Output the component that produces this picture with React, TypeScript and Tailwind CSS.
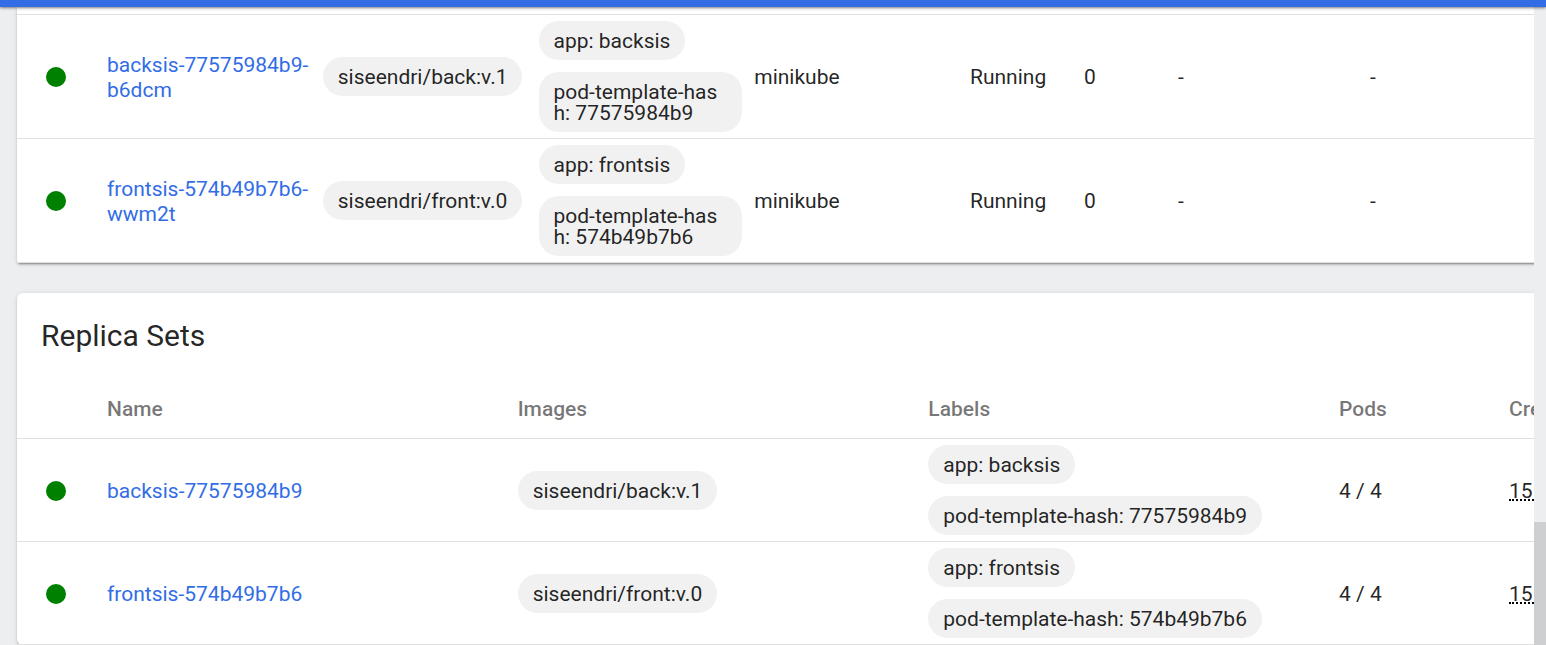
import React from "react";

type Pod = {
  name: string;
  image: string;
  labels: string[];
  node: string;
  status: string;
  restarts: number;
  cpu: string;
  memory: string;
};

type ReplicaSet = {
  name: string;
  image: string;
  labels: string[];
  pods: string;
  created: string;
};

const pods: Pod[] = [
  {
    name: "backsis-77575984b9-b6dcm",
    image: "siseendri/back:v.1",
    labels: ["app: backsis", "pod-template-hash: 77575984b9"],
    node: "minikube",
    status: "Running",
    restarts: 0,
    cpu: "-",
    memory: "-",
  },
  {
    name: "frontsis-574b49b7b6-wwm2t",
    image: "siseendri/front:v.0",
    labels: ["app: frontsis", "pod-template-hash: 574b49b7b6"],
    node: "minikube",
    status: "Running",
    restarts: 0,
    cpu: "-",
    memory: "-",
  },
];

const replicaSets: ReplicaSet[] = [
  {
    name: "backsis-77575984b9",
    image: "siseendri/back:v.1",
    labels: ["app: backsis", "pod-template-hash: 77575984b9"],
    pods: "4 / 4",
    created: "15 minutes ago",
  },
  {
    name: "frontsis-574b49b7b6",
    image: "siseendri/front:v.0",
    labels: ["app: frontsis", "pod-template-hash: 574b49b7b6"],
    pods: "4 / 4",
    created: "15 minutes ago",
  },
];

function ChipsCell({ items }: { items: string[] }) {
  return (
    <td>
      <div className="flex flex-wrap gap-3 py-1.5 pr-3">
        {items.map((item) => (
          <span
            key={item}
            className="rounded-[20px] bg-[#f1f1f1] px-[15px] pt-[10px] pb-2 leading-[21px] break-all"
          >
            {item}
          </span>
        ))}
      </div>
    </td>
  );
}

function TextCell({ children }: { children: React.ReactNode }) {
  return <td className="pt-0.5">{children}</td>;
}

function StatusCell() {
  return (
    <td className="pt-px pl-[29px]">
      <div className="size-5 rounded-full bg-[#008000]" />
    </td>
  );
}

function NameCell({ name }: { name: string }) {
  return (
    <td className="pt-0.5 pr-3">
      <a href="#" className="text-[#326de6]">
        {name}
      </a>
    </td>
  );
}

const cardShadow =
  "bg-white shadow-[0_3px_1px_-2px_rgba(0,0,0,0.2),0_2px_2px_0_rgba(0,0,0,0.14),0_1px_5px_0_rgba(0,0,0,0.12)]";
const tableStyle = "w-full table-fixed border-separate border-spacing-0 text-left [&_td]:border-b [&_td]:border-[#e0e0e0]";

function PodsCard() {
  return (
    <section className={`rounded-b-[3px] pt-[7px] ${cardShadow}`}>
      <table className={`${tableStyle} border-t border-[#e0e0e0]`}>
        <colgroup>
          <col className="w-[90px]" />
          <col />
          <col />
          <col />
          <col />
          <col className="w-[114px]" />
          <col className="w-[94px]" />
          <col className="w-[192px]" />
          <col className="w-[192px]" />
          <col className="w-[119px]" />
        </colgroup>
        <tbody>
          {pods.map((pod) => (
            <tr key={pod.name}>
              <StatusCell />
              <NameCell name={pod.name} />
              <ChipsCell items={[pod.image]} />
              <ChipsCell items={pod.labels} />
              <TextCell>{pod.node}</TextCell>
              <TextCell>{pod.status}</TextCell>
              <TextCell>{pod.restarts}</TextCell>
              <TextCell>{pod.cpu}</TextCell>
              <TextCell>{pod.memory}</TextCell>
              <td />
            </tr>
          ))}
        </tbody>
      </table>
    </section>
  );
}

function ReplicaSetsCard() {
  return (
    <section className={`rounded-[6px] ${cardShadow}`}>
      <h2 className="px-6 pt-[25px] pb-6 text-[30px] leading-9">Replica Sets</h2>
      <table className={tableStyle}>
        <colgroup>
          <col className="w-[90px]" />
          <col />
          <col />
          <col />
          <col className="w-[170px]" />
          <col className="w-[172px]" />
        </colgroup>
        <thead>
          <tr className="h-[61px] text-black/54 [&>*]:border-b [&>*]:border-[#e0e0e0] [&>*]:pt-0.5 [&>*]:font-medium">
            <td />
            <th scope="col">Name</th>
            <th scope="col">Images</th>
            <th scope="col">Labels</th>
            <th scope="col">Pods</th>
            <th scope="col">Created</th>
          </tr>
        </thead>
        <tbody>
          {replicaSets.map((set) => (
            <tr key={set.name}>
              <StatusCell />
              <NameCell name={set.name} />
              <ChipsCell items={[set.image]} />
              <ChipsCell items={set.labels} />
              <TextCell>{set.pods}</TextCell>
              <TextCell>
                <span className="inline-block border-b-2 border-dotted border-black leading-4 whitespace-nowrap">
                  {set.created}
                </span>
              </TextCell>
            </tr>
          ))}
        </tbody>
      </table>
    </section>
  );
}

export default function App() {
  return (
    <div className="flex min-h-screen flex-col bg-[#edeef0] font-[Roboto,sans-serif] text-[21px] leading-[25px] text-black/87">
      <header className="relative z-10 h-[7px] bg-[#326de6] shadow-[0_1px_3px_rgba(0,0,0,0.5)]" />
      <div className="flex grow">
        <main className="min-w-0 grow overflow-hidden pl-[17px]">
          <div className="flex min-w-[1664px] flex-col gap-[30px]">
            <PodsCard />
            <ReplicaSetsCard />
          </div>
        </main>
        <div className="flex w-3 shrink-0 flex-col bg-[#edeef0]">
          <div className="grow-[515]" />
          <div className="grow-[123] bg-[#cecfd1]" />
        </div>
      </div>
    </div>
  );
}
